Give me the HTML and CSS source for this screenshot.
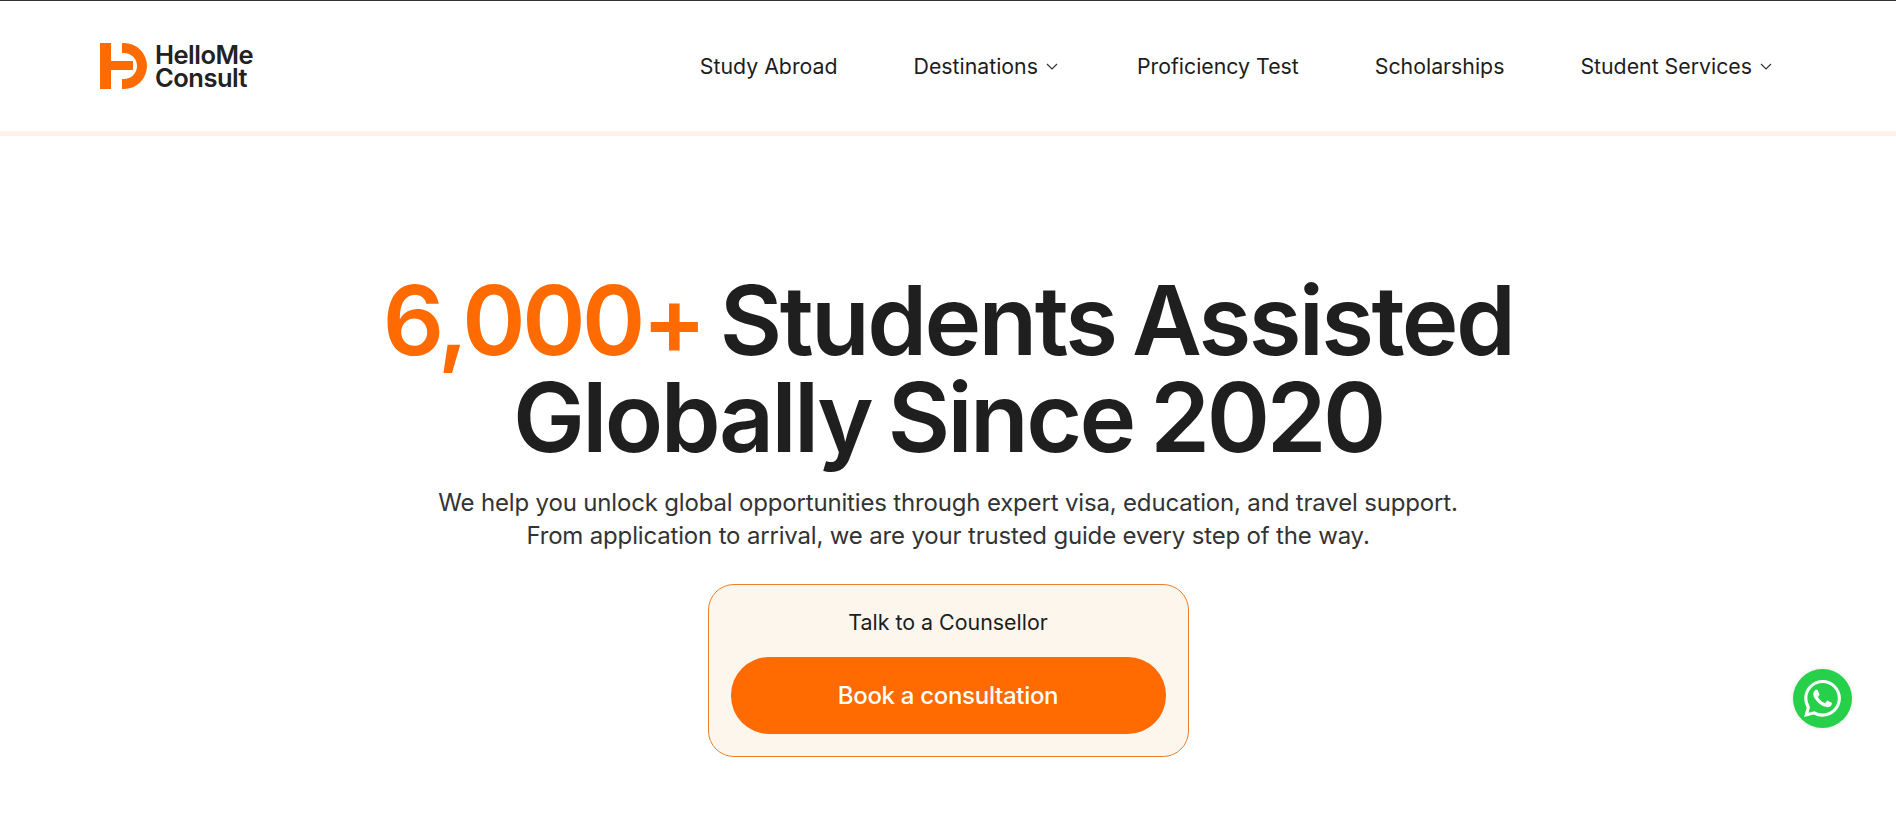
FILE: index.html
```html
<!DOCTYPE html>
<html lang="en">
<head>
    <meta charset="UTF-8">
    <meta name="viewport" content="width=device-width, initial-scale=1.0">
    <title>HelloMe Consult</title>
    <link rel="stylesheet" href="styles.css">
</head>
<body>
    <header class="site-header">
        <a class="logo" href="#">
            <svg class="logo-mark" viewBox="0 0 47 46" width="47" height="46">
                <path fill="#ff6b00" d="M0 0H11V18H33V27H11V46H0Z"/>
                <path fill="#ff6b00" d="M22 0H24A23 23 0 0 1 24 46H22V36H24A13 13 0 0 0 24 10H22Z"/>
            </svg>
            <span class="logo-text">HelloMe<br>Consult</span>
        </a>
        <nav class="main-nav">
            <a href="#">Study Abroad</a>
            <a href="#">Destinations
                <svg class="chevron" viewBox="0 0 12 12" width="12" height="12"><path d="M1 4L6 9L11 4"/></svg>
            </a>
            <a href="#">Proficiency Test</a>
            <a href="#">Scholarships</a>
            <a href="#">Student Services
                <svg class="chevron" viewBox="0 0 12 12" width="12" height="12"><path d="M1 4L6 9L11 4"/></svg>
            </a>
        </nav>
    </header>

    <main class="hero">
        <h1><span class="accent num">6,000+</span> Students Assisted<br>Globally Since <span class="num">2020</span></h1>
        <p>We help you unlock global opportunities through expert visa, education, and travel support.<br>From application to arrival, we are your trusted guide every step of the way.</p>
        <div class="cta-card">
            <div class="cta-label">Talk to a Counsellor</div>
            <a class="cta-btn" href="#">Book a consultation</a>
        </div>
    </main>

    <!-- floating chat button -->
    <a class="whatsapp" href="#" aria-label="WhatsApp">
        <svg viewBox="0 0 24 24" width="37" height="37">
            <path fill="#fff" d="M17.47 14.38c-.3-.15-1.76-.87-2.03-.97-.27-.1-.47-.15-.67.15-.2.3-.77.97-.94 1.16-.17.2-.35.22-.65.07-.3-.15-1.26-.46-2.39-1.47-.88-.79-1.48-1.76-1.65-2.06-.17-.3-.02-.46.13-.61.13-.13.3-.35.45-.52.15-.17.2-.3.3-.5.1-.2.05-.37-.02-.52-.07-.15-.67-1.61-.92-2.21-.24-.58-.49-.5-.67-.51h-.57c-.2 0-.52.07-.79.37-.27.3-1.04 1.02-1.04 2.48s1.07 2.88 1.21 3.07c.15.2 2.1 3.2 5.08 4.49.71.31 1.26.49 1.69.63.71.23 1.36.2 1.87.12.57-.09 1.76-.72 2.01-1.41.25-.7.25-1.29.17-1.41-.07-.13-.27-.2-.57-.35zM12.05 21.79h0a9.87 9.87 0 0 1-5.03-1.38l-.36-.21-3.74.98 1-3.65-.24-.37a9.86 9.86 0 0 1-1.51-5.26c0-5.45 4.44-9.88 9.89-9.88 2.64 0 5.12 1.03 6.99 2.9a9.83 9.83 0 0 1 2.89 6.99c0 5.45-4.44 9.88-9.89 9.88zM20.46 3.49A11.82 11.82 0 0 0 12.05 0C5.5 0 .16 5.34.16 11.89c0 2.1.55 4.14 1.59 5.95L.06 24l6.3-1.65a11.88 11.88 0 0 0 5.68 1.45h.01c6.55 0 11.89-5.34 11.89-11.89a11.82 11.82 0 0 0-3.48-8.41z"/>
        </svg>
    </a>
</body>
</html>
```

FILE: styles.css
```css
/* Basic Reset */
* {
    margin: 0;
    padding: 0;
    box-sizing: border-box;
}

body {
    font-family: 'Inter', 'Liberation Sans', sans-serif;
    background: #fff;
    color: #1f1f1f;
    border-top: 1px solid #333;
    overflow: hidden;
}

a {
    color: inherit;
    text-decoration: none;
}

.site-header {
    display: flex;
    justify-content: space-between;
    align-items: center;
    height: 135px;
    padding: 0 121px 0 100px;
    border-bottom: 5px solid #fff0e9;
}

.logo {
    display: flex;
    align-items: center;
    gap: 8px;
}

.logo-text {
    font-size: 25.5px;
    font-weight: 600;
    line-height: 23px;
    letter-spacing: -0.5px;
    color: #222;
}

.main-nav {
    display: flex;
    align-items: center;
    gap: 76px;
    font-size: 21.3px;
    color: #1d1d1d;
}

.main-nav a {
    display: flex;
    align-items: center;
    gap: 8px;
}

.chevron {
    margin-right: 3px;
    fill: none;
    stroke: #333;
    stroke-width: 1.2;
}

.hero {
    display: flex;
    flex-direction: column;
    align-items: center;
    padding-top: 136px;
    text-align: center;
}

h1 {
    font-size: 96px;
    font-weight: 600;
    line-height: 97px;
    letter-spacing: -2.6px;
    word-spacing: -5px;
    color: #1f1f1f;
}

.num {
    letter-spacing: -3.4px;
}

.accent {
    color: #ff6b00;
}

.hero p {
    margin-top: 20px;
    font-size: 24px;
    line-height: 33px;
    letter-spacing: -0.17px;
    color: #333;
}

.cta-card {
    width: 481px;
    margin-top: 32px;
    padding: 23px 22px 22px;
    background: #fdf6ec;
    border: 1px solid #e8802f;
    border-radius: 26px;
}

.cta-label {
    font-size: 21.4px;
    line-height: 28px;
    color: #1d1d1d;
}

.cta-btn {
    display: flex;
    justify-content: center;
    align-items: center;
    height: 77px;
    margin-top: 21px;
    background: #ff6b00;
    color: #fff;
    font-size: 24px;
    font-weight: 500;
    letter-spacing: -0.3px;
    border-radius: 38px;
}

.whatsapp {
    position: fixed;
    left: 1793px;
    top: 669px;
    display: flex;
    justify-content: center;
    align-items: center;
    width: 59px;
    height: 59px;
    background: #26d04a;
    border-radius: 50%;
    box-shadow: 0 0 4px rgba(0, 0, 0, 0.12);
}
```
